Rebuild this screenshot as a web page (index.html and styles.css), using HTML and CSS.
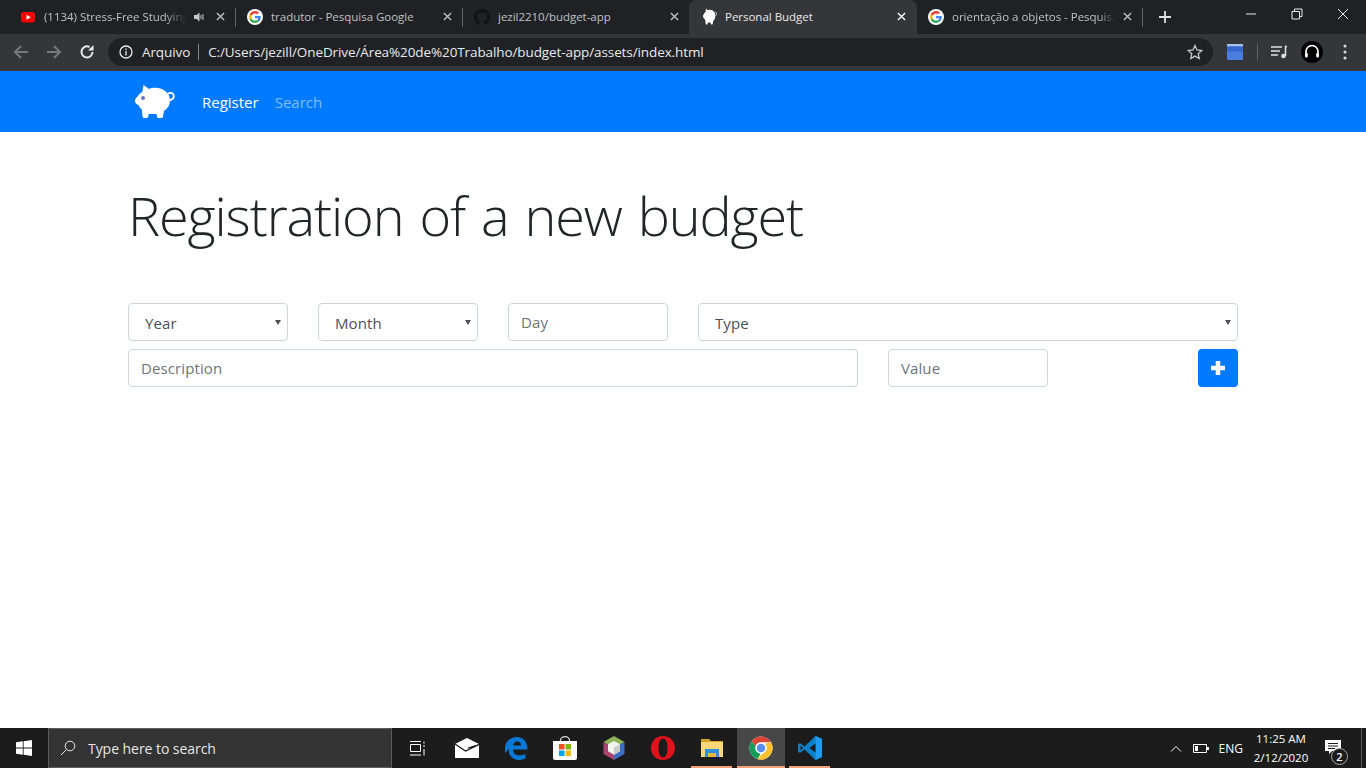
FILE: index.html
```html
<!DOCTYPE html>
<html lang="en">
<head>
<meta charset="utf-8">
<title>Personal Budget</title>
<link rel="stylesheet" href="styles.css">
</head>
<body>
<svg class="defs" width="0" height="0" aria-hidden="true">
  <symbol id="g-logo" viewBox="-8 -8 64 64">
    <circle cx="24" cy="24" r="32" fill="#fff"/>
    <path fill="#EA4335" d="M24 9.5c3.54 0 6.71 1.22 9.21 3.6l6.85-6.85C35.9 2.38 30.47 0 24 0 14.62 0 6.51 5.38 2.56 13.22l7.98 6.19C12.43 13.72 17.74 9.5 24 9.5z"/>
    <path fill="#4285F4" d="M46.98 24.55c0-1.57-.15-3.09-.38-4.55H24v9.02h12.94c-.58 2.96-2.26 5.48-4.78 7.18l7.73 6c4.51-4.18 7.09-10.36 7.09-17.65z"/>
    <path fill="#FBBC05" d="M10.53 28.59c-.48-1.45-.76-2.99-.76-4.59s.27-3.14.76-4.59l-7.98-6.19C.92 16.46 0 20.12 0 24c0 3.88.92 7.54 2.56 10.78l7.97-6.19z"/>
    <path fill="#34A853" d="M24 48c6.48 0 11.93-2.13 15.89-5.81l-7.73-6c-2.15 1.45-4.92 2.3-8.16 2.3-6.26 0-11.57-4.22-13.47-9.91l-7.98 6.19C6.51 42.62 14.62 48 24 48z"/>
  </symbol>
  <symbol id="pig" viewBox="0 0 40 35" preserveAspectRatio="none">
    <path fill="#fff" d="M8.500 1l5.500 4C16 4 18 3.800 20 3.800c9 0 15 5.700 15 12.500 0 5-2.500 8.500-6 10.500l-1 5.700c-.2 1-1 1.500-2 1.500h-2c-1 0-1.700-.5-2-1.500l-.6-2.800c-2.500.5-5 .5-7.500 0l-.6 2.800c-.3 1-1 1.500-2 1.500H9.500c-1 0-1.700-.5-2-1.500L6.800 25.500C5.500 24.500 4.500 23 3.500 21 1.500 20.500 0 19 0 17c0-1.500.8-3 2.500-4.500C3.800 10.500 5.500 9 7.500 7.500z"/>
    <path fill="none" stroke="#fff" stroke-width="1.800" d="M33 10c2-2 5.500-1 5.800 1.500.3 2.500-1.500 4.500-4 4.500"/>
  </symbol>
</svg>

<header class="tabstrip">
  <div class="tab">
    <svg class="fav" viewBox="0 0 16 16"><rect x="1" y="3" width="14" height="10.500" rx="3" fill="#f00"/><path d="M6.500 5.800v5l4.300-2.500z" fill="#fff"/></svg>
    <span class="tab-title short">(1134) Stress-Free Studying</span>
    <svg class="speaker" viewBox="0 0 12 12"><path d="M1 4h2.500L6.500 1.500v9L3.500 8H1z" fill="#c4c7c5"/><path d="M8 4v4M10 3v6" stroke="#c4c7c5" stroke-width="1" fill="none"/></svg>
    <svg class="close" viewBox="0 0 10 10"><path d="M1 1l8 8M9 1l-8 8"/></svg>
  </div>
  <div class="tab sep">
    <svg class="fav"><use href="#g-logo"/></svg>
    <span class="tab-title">tradutor - Pesquisa Google</span>
    <svg class="close" viewBox="0 0 10 10"><path d="M1 1l8 8M9 1l-8 8"/></svg>
  </div>
  <div class="tab sep">
    <svg class="fav" viewBox="0 0 16 16"><path fill="#111214" d="M8 0C3.580 0 0 3.580 0 8c0 3.540 2.290 6.530 5.470 7.590.4.070.55-.17.55-.38 0-.19-.01-.82-.01-1.490-2.010.37-2.530-.49-2.690-.94-.09-.23-.48-.94-.82-1.130-.28-.15-.68-.52-.01-.53.63-.01 1.080.58 1.230.82.720 1.210 1.870.87 2.330.66.070-.52.280-.87.510-1.070-1.780-.2-3.640-.89-3.640-3.950 0-.87.310-1.590.820-2.150-.08-.2-.36-1.020.080-2.120 0 0 .67-.21 2.200.82.640-.18 1.320-.27 2-.27.680 0 1.360.090 2 .27 1.530-1.040 2.200-.82 2.200-.82.440 1.100.160 1.920.080 2.120.510.560.820 1.270.820 2.150 0 3.070-1.870 3.750-3.650 3.950.29.250.54.730.54 1.480 0 1.070-.01 1.930-.01 2.200 0 .21.150.46.550.38A8.013 8.013 0 0016 8c0-4.420-3.580-8-8-8z"/></svg>
    <span class="tab-title">jezil2210/budget-app</span>
    <svg class="close" viewBox="0 0 10 10"><path d="M1 1l8 8M9 1l-8 8"/></svg>
  </div>
  <div class="tab active">
    <svg class="fav-pig"><use href="#pig"/></svg>
    <span class="tab-title">Personal Budget</span>
    <svg class="close" viewBox="0 0 10 10"><path d="M1 1l8 8M9 1l-8 8"/></svg>
  </div>
  <div class="tab last">
    <svg class="fav"><use href="#g-logo"/></svg>
    <span class="tab-title fade">orientação a objetos - Pesquisa Google</span>
    <svg class="close" viewBox="0 0 10 10"><path d="M1 1l8 8M9 1l-8 8"/></svg>
  </div>
  <span class="tab-divider"></span>
  <svg class="newtab" viewBox="0 0 12 12"><path d="M6 0v12M0 6h12"/></svg>
  <div class="winctl">
    <svg viewBox="0 0 12 12"><path d="M1 6h10"/></svg>
    <svg viewBox="0 0 12 12"><path d="M1 3.500h7.500V11H1zM3.500 3.500V1H11v7.500H8.500"/></svg>
    <svg viewBox="0 0 12 12"><path d="M1 1l10 10M11 1L1 11"/></svg>
  </div>
</header>

<div class="toolbar">
  <svg class="tb-icon dim" viewBox="0 0 16 16"><path d="M15 8H2M8 2L2 8l6 6"/></svg>
  <svg class="tb-icon dim" viewBox="0 0 16 16"><path d="M1 8h13M8 2l6 6-6 6"/></svg>
  <svg class="tb-icon" viewBox="0 0 16 16"><path d="M13.500 8A5.500 5.500 0 112.500 8 5.500 5.500 0 0110.500 3"/><path class="solid" d="M14.500 1v5.500H9z"/></svg>
  <div class="omnibox">
    <svg class="info" viewBox="0 0 14 14"><circle cx="7" cy="7" r="6"/><path d="M7 6v4.500M7 3.500v1.500"/></svg>
    <span class="chip">Arquivo</span>
    <span class="omni-sep"></span>
    <span class="url">C:/Users/jezill/OneDrive/Área%20de%20Trabalho/budget-app/assets/index.html</span>
    <svg class="star" viewBox="0 0 16 16"><path d="M8 1.500l2 4.500 4.800.5-3.600 3.200 1 4.800L8 12.100l-4.200 2.400 1-4.800L1.200 6.500 6 6z"/></svg>
  </div>
  <div class="ext">
    <svg class="ext-blue" viewBox="0 0 16 16"><rect width="16" height="16" rx="1" fill="#4a7fe0"/><rect width="16" height="2.500" fill="#a8c0ee"/><rect y="2.500" width="16" height="5" fill="#3566d0"/></svg>
    <span class="ext-sep"></span>
    <svg class="ext-music" viewBox="0 0 16 14"><path d="M0 2h11M0 6h9M0 10h7" stroke="#dfe1e5" stroke-width="1.500"/><path d="M14 1.500h2M14.500 1v10" stroke="#dfe1e5" stroke-width="1.500"/><circle cx="12.500" cy="11" r="2.300" fill="#dfe1e5"/></svg>
    <svg class="ext-avatar" viewBox="0 0 22 22"><circle cx="11" cy="11" r="11" fill="#000"/><path d="M5 14V10.500a6 6 0 0112 0V14" fill="none" stroke="#fff" stroke-width="1.600"/><rect x="4" y="12" width="2.800" height="4.500" rx="1" fill="#fff"/><rect x="15.200" y="12" width="2.800" height="4.500" rx="1" fill="#fff"/></svg>
    <svg class="ext-dots" viewBox="0 0 4 16"><circle cx="2" cy="2" r="1.500"/><circle cx="2" cy="8" r="1.500"/><circle cx="2" cy="14" r="1.500"/></svg>
  </div>
</div>

<nav class="navbar">
  <svg class="brand" viewBox="0 0 40 35"><use href="#pig"/><circle cx="8" cy="14" r="2" fill="#5a78c8"/></svg>
  <a class="nav-link current" href="#">Register</a>
  <a class="nav-link" href="#">Search</a>
</nav>

<main class="page">
  <h1 class="title">Registration of a new budget</h1>
  <form class="form">
    <div class="row">
      <div class="sel w-160"><select class="control select"><option>Year</option></select></div>
      <div class="sel w-160"><select class="control select"><option>Month</option></select></div>
      <input class="control w-160" placeholder="Day">
      <div class="sel grow"><select class="control select"><option>Type</option></select></div>
    </div>
    <div class="row">
      <input class="control w-730" placeholder="Description">
      <input class="control w-160" placeholder="Value">
      <button class="add" type="button" aria-label="Add"><svg viewBox="0 0 14 14"><path d="M7 0v14M0 7h14"/></svg></button>
    </div>
  </form>
</main>

<footer class="taskbar">
  <div class="start"><svg viewBox="0 0 16 16"><path fill="#fff" d="M0 2.300L6.800 1.300V7.600H0zM7.600 1.200L16 0v7.600H7.600zM0 8.400H6.800V14.700L0 13.700zM7.600 8.400H16V16L7.600 14.800z"/></svg></div>
  <div class="search">
    <svg viewBox="0 0 16 16"><circle cx="10" cy="6" r="4.800"/><path d="M6.500 9.500L1 15"/></svg>
    <span>Type here to search</span>
  </div>
  <div class="apps">
    <div class="app"><svg class="ico" viewBox="0 0 15 15" fill="none" stroke="#fff"><path d="M.5 3.500h10v7H.5zM0 .5h11M0 14h11"/><path d="M14 .5v2M14 4v2M14 8v6.500"/></svg></div>
    <div class="app"><svg class="ico lg" viewBox="0 0 24 20"><path fill="#fff" d="M0 6L12 0l12 6v14H0z"/><path fill="none" stroke="#1c1c1c" stroke-width="1.300" d="M0 6l10.500 7L24 6.500 13 10"/></svg></div>
    <div class="app"><svg class="ico lg" viewBox="0 0 24 24"><path fill="#0a78d4" fill-rule="evenodd" d="M1 12C1 5 7 1 13 1c6.500 0 10.500 5 10.500 12.500H9c0 4 3 5.800 6.500 5.800 2.500 0 4.500-.7 6-1.600v4.500c-2 1.200-4.500 1.800-7 1.800C8 23 4 18.500 4.800 13 3.500 14 2 15.500 1 17.500zM9.200 9.500h8c0-2.500-1.500-4-3.800-4-2.200 0-3.800 1.600-4.200 4z"/></svg></div>
    <div class="app"><svg class="ico lg" viewBox="0 0 24 24"><path fill="none" stroke="#ddd" stroke-width="1.300" d="M7.500 6V4.500a4.500 3.800 0 019 0V6"/><path fill="#fff" d="M0 5h24v17a2 2 0 01-2 2H2a2 2 0 01-2-2z"/><rect x="6" y="8" width="5.500" height="5.500" fill="#f25022"/><rect x="12.500" y="8" width="5.500" height="5.500" fill="#7fba00"/><rect x="6" y="14.500" width="5.500" height="5.500" fill="#00a4ef"/><rect x="12.500" y="14.500" width="5.500" height="5.500" fill="#ffb900"/></svg></div>
    <div class="app"><svg class="ico lg" viewBox="0 0 22 24"><path fill="#8fb35a" d="M11 0l10.500 6L11 12 .5 6z"/><path fill="#a8446f" d="M.5 6L11 12v12L.5 18z"/><path fill="#3b6fc4" d="M21.500 6L11 12v12l10.500-6z"/><path fill="#f3f3ee" d="M11 5l6 3.300v6.900L11 18.700 5 15.200V8.300z"/><path fill="#c9ccc8" d="M11 11.600l6-3.300v6.900l-6 3.500z"/></svg></div>
    <div class="app"><svg class="ico lg" viewBox="0 0 24 24"><path fill="#e0121c" fill-rule="evenodd" d="M12 0c7 0 12 5.500 12 12s-5 12-12 12S0 18.500 0 12 5 0 12 0zm0 2.500c-2.800 0-4.500 4-4.500 9.500s1.700 9.500 4.500 9.500 4.500-4 4.500-9.500-1.700-9.500-4.500-9.500z"/></svg></div>
    <div class="app run"><svg class="ico lg" viewBox="-1 -3 24 24"><path fill="#d9a227" d="M0 0h8l2 2h12v3H0z"/><path fill="#fbd97a" d="M0 3h22v15H0z"/><path fill="#2f8fd8" d="M4 18V10h14v8h-3v-4H7v4z"/><path fill="#e8b73a" d="M7 14h8v4H7z"/></svg></div>
    <div class="app run focus"><svg class="ico lg" viewBox="0 0 48 48"><circle cx="24" cy="24" r="23" fill="#fff"/><path fill="#db4437" d="M24 1a23 23 0 0119.900 11.500H24a11.500 11.500 0 00-11 8L5.200 10.600A23 23 0 0124 1z"/><path fill="#0f9d58" d="M5.200 10.600L13 20.500a11.500 11.500 0 0010.400 15L17 46a23 23 0 01-11.800-35.400z"/><path fill="#fbc02d" d="M43.900 12.500A23 23 0 0117 46l10.300-11.100A11.500 11.500 0 0032 15.500z"/><circle cx="24" cy="24" r="10.500" fill="#fff"/><circle cx="24" cy="24" r="8.500" fill="#5a8df0"/></svg></div>
    <div class="app run"><svg class="ico lg" viewBox="0 0 24 24"><path fill="#0e7fc8" d="M17.500 0L24 3v18l-6.500 3-11-10.500L2 17 0 15.500v-7L2 7l4.500 3.500z"/><path fill="#1f9cf0" d="M17.500 0L24 3v18l-6.500 3z"/><path fill="#1c1c1c" d="M17.500 7.500L11.500 12l6 4.500z"/><path fill="#1c1c1c" d="M2.500 9.500v5L5 12z"/></svg></div>
  </div>
  <div class="tray">
    <svg class="chev" viewBox="0 0 12 7"><path d="M1 6.500L6 1.500l5 5"/></svg>
    <svg class="batt" viewBox="0 0 16 9"><path d="M.5 .5h13v8H.5z" fill="none" stroke="#fff"/><rect x="2" y="2" width="3" height="5" fill="#fff"/><rect x="14" y="3" width="2" height="3" fill="#fff"/></svg>
    <span class="lang">ENG</span>
    <div class="clock"><span>11:25 AM</span><span>2/12/2020</span></div>
    <div class="notif">
      <svg viewBox="0 0 16 15"><path fill="#fff" d="M0 0h16v11H7l-3 3v-3H0z"/><path stroke="#1c1c1c" d="M3 3.500h10M3 6h10M3 8.500h7"/></svg>
      <span class="badge">2</span>
    </div>
    <span class="peek"></span>
  </div>
</footer>
</body>
</html>
```
FILE: styles.css
```css
* { box-sizing: border-box; }
html, body { margin: 0; height: 100%; }
body {
  display: flex;
  flex-direction: column;
  height: 768px;
  overflow: hidden;
  background: #fff;
  font-family: "Open Sans", "Noto Sans", sans-serif;
  color: #212529;
}
.defs { position: absolute; }

/* tab strip */
.tabstrip {
  flex: 0 0 34px;
  display: flex;
  align-items: stretch;
  padding-left: 8px;
  background: #202124;
  font-size: 11.5px;
  color: #bdc1c6;
}
.tab {
  width: 227px;
  display: flex;
  align-items: center;
  padding: 0 10px 1px 12px;
  position: relative;
}
.tab.last { width: 226px; padding-left: 11px; padding-right: 11px; }
.tab.sep::before {
  content: "";
  position: absolute;
  left: 0;
  top: 8px;
  height: 19px;
  width: 1px;
  background: #5f6368;
}
.tab.active {
  width: 228px;
  padding-right: 11px;
  background: #35363a;
  border-radius: 8px 8px 0 0;
  color: #e8eaed;
}
.fav { width: 16px; height: 16px; flex: none; margin-right: 8px; }
.fav-pig { width: 14px; height: 17px; flex: none; margin: 0 8px 0 2px; }
.tab-title { flex: 1; white-space: nowrap; overflow: hidden; letter-spacing: -.02px; }
.tab-title.short {
  flex: none;
  width: 142px;
  -webkit-mask-image: linear-gradient(90deg, #000 85%, transparent);
  mask-image: linear-gradient(90deg, #000 85%, transparent);
}
.tab-title.fade {
  -webkit-mask-image: linear-gradient(90deg, #000 90%, transparent);
  mask-image: linear-gradient(90deg, #000 90%, transparent);
}
.speaker { width: 12px; height: 12px; flex: none; margin: 0 2.500px 0 7px; }
.close { width: 9px; height: 9px; flex: none; margin-left: 8px; }
.close path { stroke: #bdc1c6; stroke-width: 1.500; fill: none; }
.active .close path { stroke: #fff; }
.tab-divider { width: 1px; height: 19px; margin: 8px 0 0 -1px; background: #5f6368; }
.newtab { width: 12px; height: 12px; margin: 11px 0 0 16px; }
.newtab path { stroke: #dee1e6; stroke-width: 1.800; fill: none; }
.winctl { margin-left: auto; display: flex; gap: 34px; padding: 8px 17px 0 0; }
.winctl svg { width: 12px; height: 12px; }
.winctl path { stroke: #e8eaed; stroke-width: 1; fill: none; }

/* toolbar */
.toolbar {
  flex: 0 0 37px;
  display: flex;
  align-items: center;
  padding: 0 0 1px 13px;
  background: #35363a;
}
.tb-icon { width: 16px; height: 16px; margin-right: 17px; flex: none; }
.tb-icon path { stroke: #e8eaed; stroke-width: 2; fill: none; }
.tb-icon path.solid { fill: #e8eaed; stroke: none; }
.tb-icon.dim path { stroke: #75777b; }
.omnibox {
  width: 1105px;
  height: 28px;
  margin-left: -4px;
  display: flex;
  align-items: center;
  padding: 0 10px 0 11px;
  border-radius: 14px;
  background: #202124;
  font-size: 13.5px;
  color: #e8eaed;
}
.info { width: 14px; height: 14px; flex: none; margin-right: 9px; }
.info circle, .info path { stroke: #e8eaed; stroke-width: 1.300; fill: none; }
.chip { letter-spacing: -.1px; }
.omni-sep { width: 1px; height: 16px; margin: 0 9px 0 8px; background: #80868b; }
.url { flex: 1; white-space: nowrap; letter-spacing: -.1px; }
.star { width: 16px; height: 16px; flex: none; }
.star path { stroke: #c4c7c5; stroke-width: 1.300; fill: none; }
.ext { display: flex; align-items: center; margin-left: 14px; }
.ext-blue { width: 16px; height: 16px; }
.ext-sep { width: 1px; height: 16px; margin: 0 13px 0 14px; background: #5f6368; }
.ext-music { width: 16px; height: 14px; }
.ext-avatar { width: 22px; height: 22px; margin-left: 14px; }
.ext-dots { width: 4px; height: 16px; margin-left: 20px; }
.ext-dots circle { fill: #dfe1e5; }

/* navbar */
.navbar {
  flex: 0 0 61px;
  display: flex;
  align-items: center;
  padding: 0 0 0 135px;
  background: #007bff;
}
.brand { width: 40px; height: 35px; margin: 0 19px 0 0; }
.nav-link {
  margin: 0 8px;
  font-size: 15px;
  color: rgba(255, 255, 255, .5);
  text-decoration: none;
}
.nav-link.current { color: #fff; }

/* page */
.page { flex: 1; padding: 50px 128px 0; }
.title {
  margin: 0 0 54px;
  font-size: 54px;
  line-height: 67px;
  font-weight: 300;
  letter-spacing: -1.1px;
  word-spacing: 3px;
  color: #212529;
}
.form { display: flex; flex-direction: column; gap: 8px; }
.row { display: flex; gap: 30px; }
.sel { position: relative; }
.sel::after {
  content: "";
  position: absolute;
  right: 7px;
  top: 17px;
  border: 3px solid transparent;
  border-top: 5px solid #495057;
  border-bottom: 0;
}
.w-160 { width: 160px; }
.w-730 { width: 730px; }
.grow { flex: 1; }
.control {
  height: 38px;
  padding: 0 12px;
  border: 1px solid #ced4da;
  border-radius: 4px;
  background: #fff;
  font: inherit;
  font-size: 15px;
  letter-spacing: .1px;
  color: #495057;
  outline: none;
}
.control::placeholder { color: #6c757d; opacity: 1; }
.select {
  width: 100%;
  padding: 2px 0 0 16px;
  appearance: none;
  -webkit-appearance: none;
}
.add {
  width: 40px;
  height: 38px;
  margin-left: auto;
  padding: 0;
  display: flex;
  align-items: center;
  justify-content: center;
  border: 0;
  border-radius: 4px;
  background: #007bff;
}
.add svg { width: 14px; height: 14px; }
.add path { stroke: #fff; stroke-width: 4.500; fill: none; }

/* taskbar */
.taskbar {
  flex: 0 0 40px;
  display: flex;
  align-items: stretch;
  background: #1c1c1c;
  color: #fff;
  font-size: 14px;
}
.start { width: 48px; display: flex; align-items: center; justify-content: center; }
.start svg { width: 16px; height: 16px; }
.search {
  width: 344px;
  display: flex;
  align-items: center;
  gap: 12px;
  padding-left: 11px;
  border: 1px solid #5c5c5c;
  background: #333;
  letter-spacing: -.05px;
  color: #e6e6e6;
}
.search svg { width: 16px; height: 16px; flex: none; }
.search circle, .search path { stroke: #e6e6e6; stroke-width: 1; fill: none; }
.apps { display: flex; margin-left: 1px; }
.app {
  width: 49px;
  display: flex;
  align-items: center;
  justify-content: center;
  position: relative;
}
.app.run::after {
  content: "";
  position: absolute;
  left: 4px;
  right: 4px;
  bottom: 0;
  height: 2px;
  background: #f3a07c;
}
.app.focus { width: 48px; margin-left: 1px; background: #474747; }
.app.focus::after { left: 0; right: 0; }
.ico { width: 15px; height: 15px; }
.ico.lg { width: 24px; height: 24px; }
.tray {
  margin-left: auto;
  display: flex;
  align-items: center;
  font-size: 12px;
}
.chev { width: 12px; height: 7px; }
.chev path { stroke: #fff; stroke-width: 1; fill: none; }
.batt { width: 16px; height: 9px; margin-left: 11px; }
.lang { margin-left: 10px; }
.clock {
  width: 70px;
  margin-left: 3px;
  display: flex;
  flex-direction: column;
  align-items: center;
  gap: 4px;
  font-size: 11.5px;
  line-height: 15px;
}
.notif {
  width: 45px;
  align-self: stretch;
  position: relative;
  display: flex;
  align-items: center;
}
.notif svg { width: 16px; height: 15px; margin: 0 0 1px 9px; }
.badge {
  position: absolute;
  left: 15px;
  top: 20px;
  width: 17px;
  height: 17px;
  border: 1px solid #aaa;
  border-radius: 50%;
  background: #1c1c1c;
  text-align: center;
  font-size: 11px;
  font-weight: 600;
  line-height: 15px;
}
.peek { width: 1px; height: 100%; margin-right: 4px; background: #555; }
```
